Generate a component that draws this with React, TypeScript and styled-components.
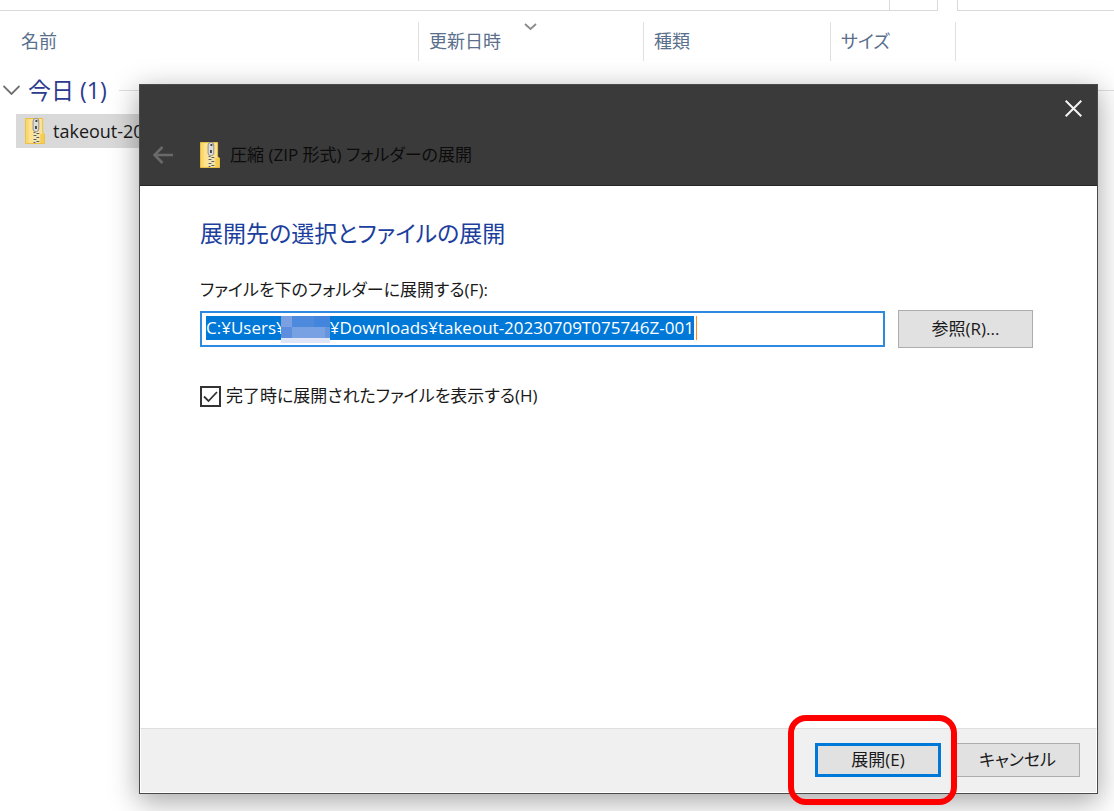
import React, { useEffect, useRef } from 'react';
import styled, { createGlobalStyle, css } from 'styled-components';

const GlobalStyle = createGlobalStyle`
  * { box-sizing: border-box; }
  body {
    margin: 0;
    background: #fff;
    font-family: "Open Sans", "Noto Sans CJK JP", sans-serif;
    font-size: 18px;
    line-height: 24px;
    color: #1a1a1a;
    font-feature-settings: "palt";
  }
  button, input { font: inherit; color: inherit; font-feature-settings: inherit; }
`;

const Desktop = styled.div`
  position: relative;
  min-height: 100vh;
  overflow: hidden;
`;

const Explorer = styled.main`
  display: flex;
  flex-direction: column;
`;

const TopBar = styled.div`
  display: flex;
  gap: 19px;
  height: 11px;
`;

const AddressBox = styled.div`
  display: flex;
  justify-content: flex-end;
  flex: 0 0 938px;
  border: solid #d9d9d9;
  border-width: 0 1px 1px 0;
`;

const RefreshBox = styled.div`
  width: 48px;
  border-left: 1px solid #d9d9d9;
`;

const SearchBox = styled.div`
  flex: 1;
  border: solid #d9d9d9;
  border-width: 0 0 1px 1px;
`;

const FileTable = styled.table`
  width: 100%;
  margin-top: 11px;
  table-layout: fixed;
  border-collapse: separate;
  border-spacing: 0;
`;

const Col = styled.col<{ $width?: number }>`
  ${({ $width }) => $width && css`width: ${$width}px;`}
`;

const ColumnHeader = styled.th<{ $first?: boolean; $last?: boolean }>`
  position: relative;
  height: 39px;
  padding: 0 0 2px ${({ $first }) => ($first ? 21 : 10)}px;
  border-right: ${({ $last }) => ($last ? 0 : 1)}px solid #e0e0e0;
  color: #5a6f8c;
  font-weight: 400;
  text-align: left;
`;

const SortMark = styled.svg`
  position: absolute;
  top: 1px;
  left: calc(50% - 7px);
`;

const Cell = styled.td`
  padding: 0;
`;

const Group = styled.div`
  display: flex;
  align-items: center;
  gap: 8px;
  height: 34px;
  margin: 12px 0 7px;
  padding-left: 3px;
  color: #2b3a8f;
  font-size: 23px;

  &::after {
    content: "";
    flex: 1;
    height: 1px;
    margin-left: 4px;
    background: #dedede;
  }
`;

const FileRow = styled.div`
  display: flex;
  align-items: center;
  gap: 8px;
  width: 380px;
  height: 34px;
  margin-left: 16px;
  padding-left: 9px;
  background: #d9d9d9;
`;

const Dialog = styled.section`
  position: absolute;
  inset: 84px 16px 17px 139px;
  display: flex;
  flex-direction: column;
  border: 1px solid #4a4a4a;
  background: #fff;
  font-size: 17px;
  box-shadow: 0 7px 26px 1px rgba(0, 0, 0, 0.34);
`;

const TitleBar = styled.header`
  display: flex;
  flex-direction: column;
  height: 101px;
  background: #3a3a3a;
  border-bottom: 1px solid #262626;
`;

const IconButton = styled.button<{ $width: number; $height: number }>`
  display: flex;
  align-items: center;
  justify-content: center;
  width: ${({ $width }) => $width}px;
  height: ${({ $height }) => $height}px;
  padding: 0;
  border: 0;
  background: none;
`;

const CaptionRow = styled.div`
  display: flex;
  justify-content: flex-end;
`;

const TitleRow = styled.div`
  display: flex;
  align-items: center;
  gap: 14px;
  height: 48px;
`;

const TitleText = styled.h1`
  display: flex;
  align-items: center;
  gap: 10px;
  margin: 0;
  color: #0c0c0c;
  font-size: 17px;
  font-weight: 400;
`;

const Body = styled.div`
  flex: 1;
  padding: 29px 64px 0 60px;
`;

const Heading = styled.h2`
  margin: 0 0 27px;
  color: #1c3f9e;
  font-size: 23px;
  font-weight: 400;
  line-height: 36px;
`;

const FieldLabel = styled.label`
  display: block;
  margin-bottom: 8px;
`;

const FieldRow = styled.div`
  display: flex;
  align-items: center;
  gap: 13px;
`;

const PathField = styled.div`
  position: relative;
  flex: 1;
  height: 36px;
  padding: 3px 4px;
  border: 2px solid #2d8ae0;
`;

const PathInput = styled.input`
  display: block;
  width: 100%;
  height: 24px;
  padding: 0;
  border: 0;
  outline: 0;
  background: none;
  line-height: 24px;
  caret-color: transparent;

  &::selection {
    background: #0078d7;
    color: #fff;
  }
`;

const Mosaic = styled.svg`
  position: absolute;
  top: 3px;
  left: 79px;
`;

const Caret = styled.span`
  position: absolute;
  top: 3px;
  left: 494px;
  width: 1px;
  height: 24px;
  background: #ff8728;
`;

const PushButton = styled.button<{ $width: number; $height: number; $primary?: boolean }>`
  width: ${({ $width }) => $width}px;
  height: ${({ $height }) => $height}px;
  padding: 0;
  border: ${({ $primary }) => ($primary ? '3px solid #0078d7' : '1px solid #adadad')};
  background: #e1e1e1;
`;

const CheckRow = styled.label`
  display: flex;
  align-items: center;
  gap: 5px;
  margin-top: 36px;
`;

const CheckWrap = styled.span`
  display: grid;
  width: 21px;
  height: 21px;
`;

const CheckInput = styled.input`
  grid-area: 1 / 1;
  width: 21px;
  height: 21px;
  margin: 0;
  appearance: none;
  border: 2px solid #333;
  background: #fff;

  &:not(:checked) + svg { visibility: hidden; }
`;

const CheckMark = styled.svg`
  grid-area: 1 / 1;
  pointer-events: none;
`;

const Footer = styled.footer`
  display: flex;
  align-items: center;
  justify-content: flex-end;
  gap: 14px;
  height: 65px;
  padding: 0 16px 2px 0;
  border: 1px solid #fff;
  border-top-color: #dfdfdf;
  background: #f0f0f0;
`;

const Highlighted = styled.div`
  position: relative;
  display: flex;

  &::after {
    content: "";
    position: absolute;
    inset: -28px -16px -28px -27px;
    border: 6px solid #fe0000;
    border-radius: 18px;
    pointer-events: none;
  }
`;

function ZipFolderIcon() {
  return (
    <svg width="20" height="26" viewBox="0 0 21 26" preserveAspectRatio="none" aria-hidden="true">
      <path d="M.5.5h18V15l2 1v9.500H.5z" fill="#fde391" stroke="#e9bf45" />
      <path d="M1 1h3v24H1z" fill="#fbd869" />
      <path d="M16 16h4v9h-4z" fill="#f7cd50" />
      <rect x="8.500" y=".5" width="6" height="13" rx="2.500" fill="#dcdcdc" stroke="#8e8e8e" />
      <path d="M11 2h2v2h-2zM10.500 8h2v3h-2z" fill="#444" />
      <path d="M9 14h6v11H9z" fill="#efe3b8" />
      <path d="M9 14h2v1H9zM12 15h3v1h-3zM9 17h3v1H9zM12 19h3v1h-3zM9 21h3v1H9zM12 23h3v1h-3zM9 24h2v1H9z" fill="#5c5c5c" />
    </svg>
  );
}

// The user name is left blank; the mosaic covers its place.
const path = 'C:¥Users¥' + '\u00a0'.repeat(10) + '¥Downloads¥takeout-20230709T075746Z-001';

export default function App() {
  const input = useRef<HTMLInputElement>(null);

  useEffect(() => {
    input.current?.focus();
    input.current?.select();
  }, []);

  return (
    <Desktop lang="ja">
      <GlobalStyle />
      <Explorer>
        <TopBar>
          <AddressBox><RefreshBox /></AddressBox>
          <SearchBox />
        </TopBar>
        <FileTable>
          <colgroup>
            <Col $width={419} />
            <Col $width={225} />
            <Col $width={187} />
            <Col $width={125} />
            <Col />
          </colgroup>
          <thead>
            <tr>
              <ColumnHeader $first>名前</ColumnHeader>
              <ColumnHeader>
                更新日時
                <SortMark width="13" height="8" viewBox="0 0 13 8" aria-hidden="true">
                  <path d="M1 1l5.500 5L12 1" fill="none" stroke="#8a8a8a" strokeWidth="1.800" />
                </SortMark>
              </ColumnHeader>
              <ColumnHeader>種類</ColumnHeader>
              <ColumnHeader>サイズ</ColumnHeader>
              <ColumnHeader as="td" $last />
            </tr>
          </thead>
          <tbody>
            <tr>
              <Cell colSpan={5}>
                <Group>
                  <svg width="17" height="10" viewBox="0 0 17 10" aria-hidden="true">
                    <path d="M.5 1l8 8 8-8" fill="none" stroke="#707070" strokeWidth="1.800" />
                  </svg>
                  今日 (1)
                </Group>
              </Cell>
            </tr>
            <tr>
              <Cell colSpan={5}>
                <FileRow>
                  <ZipFolderIcon />
                  takeout-20230709T075746Z-001
                </FileRow>
              </Cell>
            </tr>
          </tbody>
        </FileTable>
      </Explorer>

      <Dialog role="dialog" aria-labelledby="dialog-title">
        <TitleBar>
          <CaptionRow>
            <IconButton $width={48} $height={46} aria-label="閉じる">
              <svg width="17" height="17" viewBox="0 0 17 17" aria-hidden="true">
                <path d="M.7.7l15.600 15.600M16.300.7L.7 16.300" stroke="#f4f4f4" strokeWidth="2" />
              </svg>
            </IconButton>
          </CaptionRow>
          <TitleRow>
            <IconButton $width={46} $height={40} disabled aria-label="戻る">
              <svg width="20" height="18" viewBox="0 0 20 18" aria-hidden="true">
                <path d="M20 9H2M9.500 1L1.500 9l8 8" fill="none" stroke="#6a6a6a" strokeWidth="2.600" />
              </svg>
            </IconButton>
            <TitleText id="dialog-title">
              <ZipFolderIcon />
              圧縮 (ZIP 形式) フォルダーの展開
            </TitleText>
          </TitleRow>
        </TitleBar>

        <Body>
          <Heading>展開先の選択とファイルの展開</Heading>
          <FieldLabel htmlFor="target">ファイルを下のフォルダーに展開する(F):</FieldLabel>
          <FieldRow>
            <PathField>
              <PathInput id="target" ref={input} defaultValue={path} spellCheck={false} />
              <Mosaic width="49" height="27" viewBox="0 0 49 27" shapeRendering="crispEdges" aria-hidden="true">
                <path d="M0 0h11v11H0z" fill="#7ba0e2" />
                <path d="M11 0h22v11H11z" fill="#4d8ade" />
                <path d="M33 0h16v11H33z" fill="#4384dc" />
                <path d="M0 11h11v11H0z" fill="#5d8edd" />
                <path d="M11 11h33v11H11z" fill="#77a1e3" />
                <path d="M44 11h5v11h-5z" fill="#6695de" />
                <path d="M0 22h49v5H0z" fill="#dfe4f6" />
              </Mosaic>
              <Caret />
            </PathField>
            <PushButton type="button" $width={135} $height={38}>参照(R)...</PushButton>
          </FieldRow>
          <CheckRow>
            <CheckWrap>
              <CheckInput type="checkbox" defaultChecked />
              <CheckMark width="21" height="21" viewBox="0 0 21 21" aria-hidden="true">
                <path d="M4 10.500l4.500 4.500L17 6" fill="none" stroke="#333" strokeWidth="1.800" />
              </CheckMark>
            </CheckWrap>
            完了時に展開されたファイルを表示する(H)
          </CheckRow>
        </Body>

        <Footer>
          <Highlighted>
            <PushButton type="button" $width={126} $height={34} $primary>展開(E)</PushButton>
          </Highlighted>
          <PushButton type="button" $width={125} $height={34}>キャンセル</PushButton>
        </Footer>
      </Dialog>
    </Desktop>
  );
}
